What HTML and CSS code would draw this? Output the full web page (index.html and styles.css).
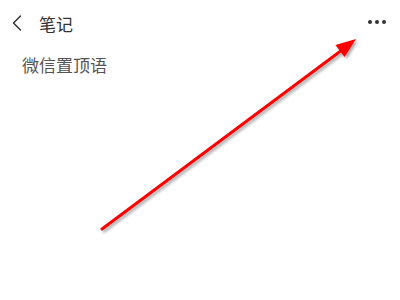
FILE: index.html
```html
<!DOCTYPE html>
<html lang="zh-CN">
<head>
    <meta charset="UTF-8">
    <meta name="viewport" content="width=device-width, initial-scale=1.0">
    <title>笔记</title>
    <link rel="stylesheet" href="styles.css">
</head>
<body>
    <div class="page">
        <!-- Top bar -->
        <div class="topbar">
            <div class="left">
                <svg class="back" width="12" height="18" viewBox="0 0 12 18">
                    <path d="M9.5 2 L2.5 9 L9.5 16" fill="none" stroke="#333" stroke-width="1.5" stroke-linecap="round" stroke-linejoin="round"/>
                </svg>
                <span class="title">笔记</span>
            </div>
            <div class="more">
                <span class="dot"></span>
                <span class="dot"></span>
                <span class="dot"></span>
            </div>
        </div>

        <div class="note">微信置顶语</div>

        <!-- Annotation arrow -->
        <svg class="arrow" width="400" height="300" viewBox="0 0 400 300">
            <line x1="102" y1="229" x2="342" y2="50" stroke="#ff0000" stroke-width="3" stroke-linecap="round"/>
            <polygon points="356,39 335.5,45 344.5,57" fill="#ff0000"/>
        </svg>
    </div>
</body>
</html>
```

FILE: styles.css
```css
/* Global Styles */
body {
    margin: 0;
    padding: 0;
    background: #fff;
    font-family: 'Noto Sans CJK SC', 'Noto Sans', sans-serif;
}

.page {
    position: relative;
    width: 400px;
    height: 300px;
    overflow: hidden;
}

/* Top bar */
.topbar {
    height: 46px;
    display: flex;
    align-items: center;
    justify-content: space-between;
    padding: 0 12px 0 11px;
}

.left {
    display: flex;
    align-items: center;
    gap: 16px;
}

.back {
    display: block;
}

.title {
    font-size: 17px;
    color: #333;
    line-height: 1;
}

.more {
    display: flex;
    gap: 3px;
    margin-top: -2px;
    padding-right: 2px;
}

.dot {
    width: 4px;
    height: 4px;
    border-radius: 50%;
    background: #333;
}

/* Note content */
.note {
    padding: 8px 0 0 22px;
    font-size: 17px;
    color: #555;
    line-height: 22px;
}

/* Annotation overlay */
.arrow {
    position: absolute;
    left: 0;
    top: 0;
    filter: drop-shadow(2px 2px 1.5px rgba(0, 0, 0, 0.35));
}
```
